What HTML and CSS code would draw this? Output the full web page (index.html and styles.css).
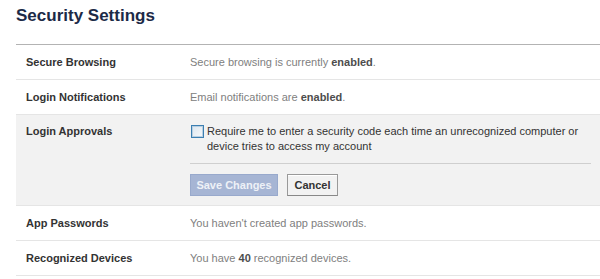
FILE: index.html
```html
<!DOCTYPE html>
<html>
<head>
<meta charset="utf-8">
<link rel="stylesheet" href="styles.css">
</head>
<body>
<div class="page">
  <h2 class="title">Security Settings</h2>
  <div class="settings">
    <div class="row">
      <div class="label">Secure Browsing</div>
      <div class="value">Secure browsing is currently <b>enabled</b>.</div>
    </div>
    <div class="row">
      <div class="label">Login Notifications</div>
      <div class="value">Email notifications are <b>enabled</b>.</div>
    </div>
    <div class="row row-open">
      <div class="label">Login Approvals</div>
      <div class="editor">
        <label class="check">
          <span class="box"></span>
          <span class="check-text">Require me to enter a security code each time an unrecognized computer or device tries to access my account</span>
        </label>
        <div class="actions">
          <button class="btn btn-save" disabled>Save Changes</button>
          <button class="btn btn-cancel">Cancel</button>
        </div>
      </div>
    </div>
    <div class="row">
      <div class="label">App Passwords</div>
      <div class="value">You haven't created app passwords.</div>
    </div>
    <div class="row">
      <div class="label">Recognized Devices</div>
      <div class="value">You have <b>40</b> recognized devices.</div>
    </div>
  </div>
</div>
</body>
</html>
```
FILE: styles.css
```css
html, body {
  margin: 0;
  padding: 0;
  background: #fff;
}
body {
  font-family: "Liberation Sans", Arial, sans-serif;
  font-size: 11px;
  color: #333;
}
.page {
  padding-left: 16px;
}
.title {
  margin: 0;
  padding-top: 6px;
  height: 44px;
  box-sizing: border-box;
  font-size: 17px;
  line-height: 20px;
  font-weight: bold;
  color: #1c2a47;
}
.settings {
  border-top: 1px solid #b3b3b3;
}
.row {
  display: grid;
  grid-template-columns: 164px 1fr;
  padding: 10px 0 10px 10px;
  line-height: 14px;
  border-bottom: 1px solid #e5e5e5;
}
.label {
  font-weight: bold;
  color: #333;
}
.value {
  color: #808080;
}
.value b {
  color: #4d4d4d;
}
.row-open {
  background: #f2f2f2;
  padding-top: 9px;
  padding-bottom: 9px;
  padding-right: 9px;
}
.editor {
  display: flex;
  flex-direction: column;
}
.check {
  display: flex;
  align-items: flex-start;
  gap: 3px;
  line-height: 15px;
  color: #333;
  padding-bottom: 9px;
  border-bottom: 1px solid #cfcfcf;
}
.box {
  flex: none;
  width: 11px;
  height: 11px;
  margin: 1px 0 0 1px;
  border: 1px solid #3c7fb1;
  background: linear-gradient(135deg, #dce6ee, #f7f9fb);
  box-shadow: inset 0 0 0 1px #b8cfe2;
}
.actions {
  display: flex;
  gap: 9px;
  padding-top: 10px;
}
.btn {
  font-family: inherit;
  font-size: 11px;
  font-weight: bold;
  height: 22px;
  padding: 0;
  margin: 0;
  white-space: nowrap;
  box-sizing: border-box;
}
.btn-save {
  width: 88px;
  background: #a6b5d4;
  border: 1px solid #98a9cc;
  color: #eef1f7;
}
.btn-cancel {
  width: 51px;
  background: #f2f2f2;
  border: 1px solid #999;
  border-bottom-color: #888;
  color: #333;
  box-shadow: inset 0 1px 0 #fff;
}
```
